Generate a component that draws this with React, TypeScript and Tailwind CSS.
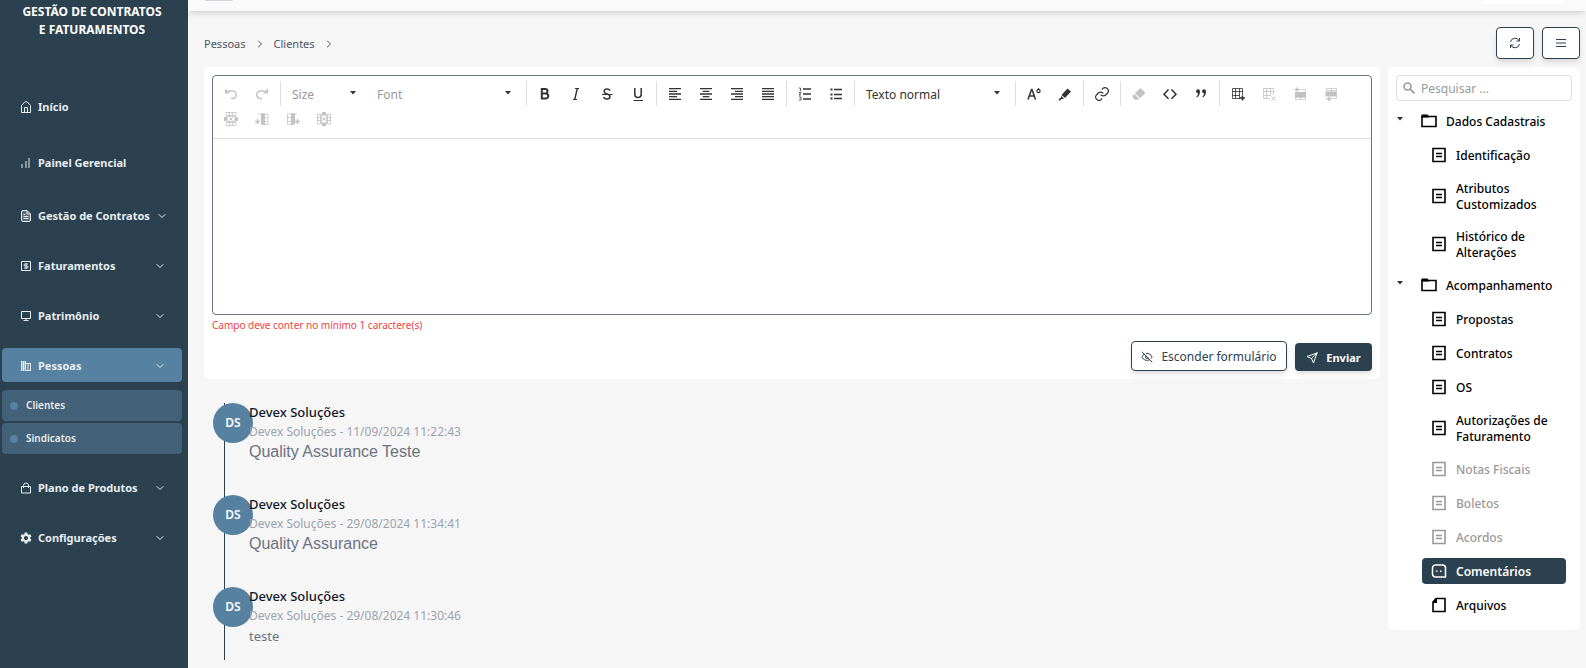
import type { ReactNode } from "react";
import { FiChevronDown, FiChevronRight, FiSend } from "react-icons/fi";
import { MdSettings, MdFormatAlignLeft, MdFormatAlignCenter, MdFormatAlignRight, MdFormatAlignJustify } from "react-icons/md";
import { LuEyeOff } from "react-icons/lu";

type IconProps = { children: ReactNode; size?: string; box?: number };

const Svg = ({ children, size = "size-4", box = 16 }: IconProps) => (
  <svg viewBox={`0 0 ${box} ${box}`} className={`${size} shrink-0`} fill="none" stroke="currentColor" strokeWidth="1" aria-hidden="true">
    {children}
  </svg>
);

const fill = { fill: "currentColor", stroke: "none" };

/* sidebar icons */
const HomeIcon = () => (
  <Svg size="size-3" box={12}>
    <path d="M1.500 4.500 4.500 1.200Q6 0 7.500 1.200L10.500 4.500V11.500h-9z" strokeLinejoin="round" />
    <path d="M4.500 11.500V6.500h3v5" />
  </Svg>
);
const ChartIcon = () => (
  <Svg size="size-3" box={12}>
    <g {...fill} opacity="0.5">
      <path d="M1 7h2v4H1zM5 4h2v7H5zM8 1h2v10H8z" />
    </g>
  </Svg>
);
const DocIcon = () => (
  <Svg size="size-3" box={12}>
    <path d="M1.500 2Q1.500.5 3 .5h4l3.500 3.500v6q0 1.500-1.500 1.500H3Q1.500 11.500 1.500 10z" fill="currentColor" fillOpacity="0.25" />
    <path d="M7 .5V4h3.500M3.500 6.500h5M3.500 8.500h5M3.500 4.500h2" />
  </Svg>
);
const MoneyIcon = () => (
  <Svg size="size-3" box={12}>
    <path d="M1.500 1.500h9v9h-9z" />
    <path d="M8 4H5Q4 4 4 5t1 1h2q1 0 1 1T7 8H4M6 3v6" />
  </Svg>
);
const MonitorIcon = () => (
  <Svg size="size-3" box={12}>
    <path d="M1.500 1.500h9v7h-9zM6 8.500v2M3.500 10.500h5" />
  </Svg>
);
const BuildingIcon = () => (
  <Svg size="size-3" box={12}>
    <path d="M1 1h5v10H1z" {...fill} opacity="0.5" />
    <path d="M1.500 1v10M3.500 1v10M5.500 1v10M6 3.500h5M6 10.500h5M8 3.500v7M10.500 3.500v7" />
  </Svg>
);
const LockIcon = () => (
  <Svg size="size-3" box={12}>
    <path d="M1.500 4.500h9v6.500h-9zM3.500 6V3.500Q3.500 1 6 1t2.500 2.500V6" />
  </Svg>
);

const menu = [
  { label: "Início", icon: <HomeIcon /> },
  { label: "Painel Gerencial", icon: <ChartIcon /> },
  { label: "Gestão de Contratos", icon: <DocIcon />, group: true },
  { label: "Faturamentos", icon: <MoneyIcon />, group: true },
  { label: "Patrimônio", icon: <MonitorIcon />, group: true },
  { label: "Pessoas", icon: <BuildingIcon />, group: true, children: ["Clientes", "Sindicatos"] },
  { label: "Plano de Produtos", icon: <LockIcon />, group: true },
  { label: "Configurações", icon: <MdSettings className="size-3 shrink-0 scale-115" />, group: true },
];

const Sidebar = () => (
  <aside className="w-[188px] shrink-0 bg-[#2c4150] text-[#e8edf0]">
    <h1 className="px-5 pt-[3px] pr-6 text-center text-[12px] leading-[18px] font-bold text-white">
      GESTÃO DE CONTRATOS E FATURAMENTOS
    </h1>
    <nav className="mt-[47px] flex flex-col gap-4 pr-[6px] pl-[2px]">
      {menu.map((item) => (
        <div key={item.label}>
          {item.group ? (
            <button
              type="button"
              className={`flex h-[34px] w-full items-center gap-[6px] rounded pt-[2px] pr-4 pl-[18px] text-[11px] font-bold ${
                item.children ? "bg-[#5681a0]" : ""
              }`}
            >
              {item.icon}
              <span className="flex-1 text-left whitespace-nowrap">{item.label}</span>
              <FiChevronDown className="size-3 shrink-0" />
            </button>
          ) : (
            <a href="#" className="flex h-10 items-center gap-[6px] pt-[2px] pl-[18px] text-[11px] font-bold">
              {item.icon}
              {item.label}
            </a>
          )}
          {item.children && (
            <ul className="mt-2 flex flex-col gap-[2px]">
              {item.children.map((child) => (
                <li key={child}>
                  <a href="#" className="flex h-[31px] items-center gap-2 rounded bg-[#436178] pl-2 text-[10px] font-semibold">
                    <span className="size-2 rounded-full bg-[#5681a0]" />
                    {child}
                  </a>
                </li>
              ))}
            </ul>
          )}
        </div>
      ))}
    </nav>
  </aside>
);

const Tool = ({ label, disabled, children }: { label: string; disabled?: boolean; children: ReactNode }) => (
  <button
    type="button"
    aria-label={label}
    disabled={disabled}
    className={`flex h-[25px] w-[31px] items-center justify-center ${disabled ? "text-[#c2c2c2]" : "text-[#333]"}`}
  >
    {children}
  </button>
);

const Separator = () => <span className="mr-[2px] ml-[3px] h-[25px] w-px bg-[#ddd]" />;

const Caret = () => (
  <svg viewBox="0 0 6 4" className="h-[4px] w-[6px]" aria-hidden="true">
    <path d="M0 0h6L3 3.500z" fill="#333" />
  </svg>
);

const ToolSelect = ({ label, width, muted }: { label: string; width: string; muted?: boolean }) => (
  <div className={`relative h-[25px] ${width}`}>
    <select
      aria-label={label}
      className={`h-full w-full appearance-none bg-transparent pl-[9px] text-[12px] outline-none ${muted ? "text-[#999]" : "text-[#333]"}`}
    >
      <option>{label}</option>
    </select>
    <span className="pointer-events-none absolute top-[10px] right-[12px]">
      <Caret />
    </span>
  </div>
);

const Toolbar = () => (
  <div className="flex flex-wrap border-b border-[#ddd] pt-[5px] pr-1 pb-[7px] pl-[2px]">
    <Tool label="Desfazer" disabled>
      <Svg><path d="M4.500 5h5a3.500 3.500 0 0 1 0 7.500H8" strokeWidth="1.500" /><path {...fill} d="M2 2.500v5h5z" /></Svg>
    </Tool>
    <Tool label="Refazer" disabled>
      <Svg><path d="M11.500 5h-5a3.500 3.500 0 0 0 0 7.500H8" strokeWidth="1.500" /><path {...fill} d="M14 2.500v5H9z" /></Svg>
    </Tool>
    <Separator />
    <ToolSelect label="Size" width="w-[85px]" muted />
    <ToolSelect label="Font" width="w-[155px]" muted />
    <Separator />
    <Tool label="Negrito">
      <Svg><path d="M4.800 3h3.400a2.200 2.200 0 0 1 0 4.600H4.800zM4.800 7.600h4a2.500 2.500 0 0 1 0 5H4.800z" strokeWidth="2" /></Svg>
    </Tool>
    <Tool label="Itálico">
      <Svg><path d="M7 2.500h4M5 13.500h4" /><path d="M9.300 2.500l-2.600 11" strokeWidth="1.400" /></Svg>
    </Tool>
    <Tool label="Tachado">
      <Svg><path d="M11 4.800Q10.500 3 8 3 5.200 3 5.200 5.200T8 8t3 2.600Q11 13 8 13t-3.200-2" strokeWidth="1.500" /><path d="M3 8.500h10.500" /></Svg>
    </Tool>
    <Tool label="Sublinhado">
      <Svg><path d="M4.800 2v6.500q0 3 3.200 3t3.200-3V2" strokeWidth="1.500" /><path d="M3.500 14.500h9.500" /></Svg>
    </Tool>
    <Separator />
    <Tool label="Alinhar à esquerda"><MdFormatAlignLeft className="size-4" /></Tool>
    <Tool label="Centralizar"><MdFormatAlignCenter className="size-4" /></Tool>
    <Tool label="Alinhar à direita"><MdFormatAlignRight className="size-4" /></Tool>
    <Tool label="Justificar"><MdFormatAlignJustify className="size-4" /></Tool>
    <Separator />
    <Tool label="Lista numerada">
      <Svg><path d="M6 3.500h8M6 8.500h8M6 13.500h8" strokeWidth="1.400" transform="translate(0 -.5)" /><path d="M2 2.500h1.500v3M2 7h2L2 9.500h2M2 11.500h2v3H2" strokeWidth=".8" transform="translate(0 -.5)" /></Svg>
    </Tool>
    <Tool label="Lista com marcadores">
      <Svg><path d="M6 3.500h8M6 8.500h8M6 12.500h8" strokeWidth="1.400" /><path {...fill} d="M2.500 2.500h2v2h-2zM2.500 7.500h2v2h-2zM2.500 11.500h2v2h-2z" /></Svg>
    </Tool>
    <Separator />
    <ToolSelect label="Texto normal" width="w-[155px]" />
    <Separator />
    <Tool label="Cor do texto">
      <Svg><path d="M2 13.500l3.500-10h.5l3.500 10M3.300 10h4.900" strokeWidth="1.500" /><circle cx="12.500" cy="5" r="1.600" strokeWidth="1.200" /><path d="M12.500 2v2" /></Svg>
    </Tool>
    <Tool label="Cor de fundo">
      <Svg><path {...fill} d="M10.500 2.500 14 5.500 8 12 4.500 9zM4 9.800 7 12.500l-2 .8-1-.8zM3 11.500 4.500 13 3 14.500H1.500z" /></Svg>
    </Tool>
    <Separator />
    <Tool label="Link">
      <Svg box={24}><path d="M10 13a5 5 0 0 0 7.500.5l3-3a5 5 0 0 0-7-7l-1.700 1.700M14 11a5 5 0 0 0-7.500-.5l-3 3a5 5 0 0 0 7 7l1.700-1.700" strokeWidth="1.800" /></Svg>
    </Tool>
    <Separator />
    <Tool label="Limpar formatação" disabled>
      <Svg><path {...fill} d="M9.500 2 14.500 7 9 12.200 4 7.200zM3.300 8 8 12.800l-1 1H4L1.500 11.300V10z" /></Svg>
    </Tool>
    <Tool label="Código">
      <Svg><path d="M6.500 3.500 2 8.200l4.500 4.600M9.500 3.500 14 8.200l-4.500 4.600" strokeWidth="1.500" /></Svg>
    </Tool>
    <Tool label="Citação">
      <Svg><path {...fill} d="M3 5.300a2 2 0 1 1 4 0Q7 9.500 4 11.500l-.7-.7Q5 9.300 5 7.300 3 7.300 3 5.300zM9 5.300a2 2 0 1 1 4 0q0 4.200-3 6.200l-.7-.7Q11 9.300 11 7.300 9 7.300 9 5.300z" /></Svg>
    </Tool>
    <Separator />
    <Tool label="Inserir tabela">
      <Svg><path d="M2.500 2.500h10v10h-10zM2.500 5.500h10M2.500 9.500h10M5.500 2.500v10M9.500 2.500v10" strokeWidth=".8" /><path d="M10 9h5v6h-5z" fill="#fff" stroke="none" /><path d="M12.500 9.500v5M10 12h5" strokeWidth="1.600" /></Svg>
    </Tool>
    <Tool label="Excluir tabela" disabled>
      <Svg><path d="M2.500 2.500h10v6M9 12.500H2.500v-10M2.500 5.500h10M2.500 9.500H10M5.500 2.500v10M9.500 2.500v7" strokeWidth=".8" /><path d="M10.500 10.500l4 4M14.500 10.500l-4 4" /></Svg>
    </Tool>
    <Tool label="Inserir linha acima" disabled>
      <Svg><path {...fill} d="M3 6h11v5H3z" /><path d="M8 3.500h5.500v10h-10V8M3.500 11.500h10M8.500 11v2.500" strokeWidth=".7" /><path d="M2.500 3.500h5M5 1.500v4" strokeWidth="1.500" /></Svg>
    </Tool>
    <Tool label="Inserir linha abaixo" disabled>
      <Svg><path {...fill} d="M2.500 5.500h11v5h-11z" /><path d="M9 12.500h4.500v-10h-10V9M3.500 4.500h10M8.500 2.500v3" strokeWidth=".7" /><path d="M3.500 13h5M6 11v4" strokeWidth="1.500" /></Svg>
    </Tool>
    <Tool label="Excluir linha" disabled>
      <Svg><path d="M3 1.500h10v3H3zM3 11.500h10v3H3zM6.500 1.500v3M9.500 1.500v3M6.500 11.500v3M9.500 11.500v3M3.500 5.500h9M3.500 10.500h9" strokeWidth=".8" /><path d="M6.500 6.500l3 3M9.500 6.500l-3 3" /><path {...fill} d="M1 6h3.500v4H1zM11.500 6H15v4h-3.500z" /></Svg>
    </Tool>
    <Tool label="Inserir coluna à esquerda" disabled>
      <Svg><path {...fill} d="M7 2.500h4v11H7z" /><path d="M4 3h10v10.500H8M10.500 6.500h3M10.500 10.500h3" strokeWidth=".8" /><path d="M1 10.500h5M3.500 8v5" strokeWidth="1.500" /></Svg>
    </Tool>
    <Tool label="Inserir coluna à direita" disabled>
      <Svg><path {...fill} d="M6 2.500h4v11H6z" /><path d="M12 3H2.500v10.500H8M2.500 6.500h4M2.500 10.500h4" strokeWidth=".8" /><path d="M10 10.500h5M12.500 8v5" strokeWidth="1.500" /></Svg>
    </Tool>
    <Tool label="Excluir coluna" disabled>
      <Svg><path d="M1.500 3h3v10h-3zM11.500 3h3v10h-3zM1.500 6.500h3M1.500 9.500h3M11.500 6.500h3M11.500 9.500h3M5.500 3.500v9M10.500 3.500v9" strokeWidth=".8" /><path d="M6.500 6.500l3 3M9.500 6.500l-3 3" /><path {...fill} d="M6 1h4v3.500H6zM6 11.500h4V15H6z" /></Svg>
    </Tool>
  </div>
);

const CommentForm = () => (
  <form onSubmit={(e) => e.preventDefault()} className="rounded-md bg-white p-2">
    <div className="rounded border border-[#6b7280]">
      <Toolbar />
      <textarea aria-label="Comentário" className="block h-[175px] w-full resize-none outline-none" />
    </div>
    <p className="mt-[2px] text-[10px] leading-4 text-[#ef4444]">Campo deve conter no mínimo 1 caractere(s)</p>
    <div className="mt-2 flex items-end justify-end gap-2">
      <button
        type="button"
        className="flex h-[30px] w-[156px] items-center justify-center gap-2 rounded border border-[#2c4150] bg-white pt-[2px] text-[12px] whitespace-nowrap text-[#2c4150] shadow-md"
      >
        <LuEyeOff className="size-3" />
        Esconder formulário
      </button>
      <button
        type="submit"
        className="flex h-7 w-[77px] items-center justify-center gap-2 rounded bg-[#2c4150] pt-[2px] text-[11px] font-bold text-white shadow-md"
      >
        <FiSend className="size-3" />
        Enviar
      </button>
    </div>
  </form>
);

const comments = [
  { date: "11/09/2024 11:22:43", text: "Quality Assurance Teste", rich: true },
  { date: "29/08/2024 11:34:41", text: "Quality Assurance", rich: true },
  { date: "29/08/2024 11:30:46", text: "teste", rich: false },
];

const Timeline = () => (
  <ol className="mt-6 ml-5 border-l border-[#2c4150]">
    {comments.map((comment) => (
      <li key={comment.date} className="relative h-[92px] pl-6 last:h-[73px]">
        <span className="absolute -left-3 flex size-10 items-center justify-center rounded-full bg-[#5681a0] text-[12px] font-semibold text-white">
          DS
        </span>
        <div className="relative">
          <h3 className="text-[13px] leading-[18px] font-medium text-[#111827]">Devex Soluções</h3>
          <p className="mt-px text-[12px] leading-5 text-[#9ca3af]">Devex Soluções - {comment.date}</p>
          <p className={`leading-5 text-[#6b7280] ${comment.rich ? "font-['Liberation_Sans',sans-serif] text-[16px]" : "text-[13px]"}`}>
            {comment.text}
          </p>
        </div>
      </li>
    ))}
  </ol>
);

const PageIcon = () => (
  <Svg>
    <path d="M2 2h12v13H2z" strokeWidth="1.600" transform="translate(0 -.5)" />
    <path d="M5 6.500h6M5 9.500h6" strokeWidth="1.400" />
  </Svg>
);
const FolderIcon = () => (
  <Svg>
    <path d="M1 3.500h14v10H1z" strokeWidth="1.600" />
    <path {...fill} d="M.5 1.500h6l1.500 2v1H.5z" />
  </Svg>
);
const CommentIcon = () => (
  <Svg>
    <path d="M4.500 2h7A3 3 0 0 1 14.500 5v9h-10A3 3 0 0 1 1.500 11V5a3 3 0 0 1 3-3z" strokeWidth="1.500" />
    <path {...fill} d="M5 7.500h1.500V9H5zM9 7.500h1.500V9H9z" />
  </Svg>
);
const FileIcon = () => (
  <Svg>
    <path d="M5 1.500h9v13H2V5z" strokeWidth="1.600" />
    <path {...fill} d="M6 1v5H1.500z" />
  </Svg>
);

type Leaf = { label: string; disabled?: boolean; active?: boolean; tall?: boolean; icon?: ReactNode };

const tree: { label: string; items: Leaf[] }[] = [
  {
    label: "Dados Cadastrais",
    items: [{ label: "Identificação" }, { label: "Atributos Customizados", tall: true }, { label: "Histórico de Alterações", tall: true }],
  },
  {
    label: "Acompanhamento",
    items: [
      { label: "Propostas" },
      { label: "Contratos" },
      { label: "OS" },
      { label: "Autorizações de Faturamento", tall: true },
      { label: "Notas Fiscais", disabled: true },
      { label: "Boletos", disabled: true },
      { label: "Acordos", disabled: true },
      { label: "Comentários", active: true, icon: <CommentIcon /> },
      { label: "Arquivos", icon: <FileIcon /> },
    ],
  },
];

const TreePanel = () => (
  <aside className="w-48 shrink-0 rounded-md bg-white px-2 pt-2 pb-3">
    <label className="flex h-[26px] items-center gap-[6px] rounded border border-[#ddd] px-[6px] text-[#999]">
      <Svg size="size-3" box={12}>
        <circle cx="4.500" cy="4.500" r="3.500" strokeWidth="1.600" />
        <path d="M7.200 7.200 11.300 11.300" strokeWidth="1.800" />
      </Svg>
      <input type="search" aria-label="Pesquisar" placeholder="Pesquisar ..." className="w-full pt-px text-[12px] outline-none placeholder:text-[#999]" />
    </label>
    <ul className="mt-[7px] flex flex-col gap-2 text-[12px] leading-4 font-medium text-black">
      {tree.map((group) => (
        <li key={group.label} className="flex flex-col gap-2">
          <button type="button" className="flex h-[26px] items-center text-left">
            <span className="mb-1 w-[25px] pl-px">
              <Caret />
            </span>
            <FolderIcon />
            <span className="ml-[9px] pt-[2px]">{group.label}</span>
          </button>
          <ul className="flex flex-col gap-2 pr-[6px] pl-[26px]">
            {group.items.map((item) => (
              <li key={item.label}>
                <a
                  href="#"
                  className={`flex items-center gap-[9px] rounded pr-4 pl-[9px] ${item.tall ? "h-10" : "h-[26px]"} ${
                    item.active ? "bg-[#2c4150] font-semibold text-white" : ""
                  } ${item.disabled ? "text-[#999]" : ""}`}
                >
                  {item.icon ?? <PageIcon />}
                  <span className="pt-[2px]">{item.label}</span>
                </a>
              </li>
            ))}
          </ul>
        </li>
      ))}
    </ul>
  </aside>
);

const Header = () => (
  <div className="flex items-start justify-between pt-4">
    <nav aria-label="Trilha" className="flex h-[34px] items-center gap-2 text-[11px] text-[#4b5563]">
      <a href="#">Pessoas</a>
      <FiChevronRight className="size-3" />
      <a href="#">Clientes</a>
      <FiChevronRight className="size-3" />
    </nav>
    <div className="flex gap-2">
      <button type="button" aria-label="Atualizar" className="flex h-8 w-[38px] items-center justify-center rounded border border-[#2c4150] bg-white text-[#2c4150] shadow-md">
        <Svg size="size-3" box={12}>
          <path d="M1.500 5A4.600 4.600 0 0 1 10 3.500M10.500 7A4.600 4.600 0 0 1 2 8.500M10.500 1v3h-3M1.500 11V8h3" />
        </Svg>
      </button>
      <button type="button" aria-label="Menu" className="flex h-8 w-[38px] items-center justify-center rounded border border-[#2c4150] bg-white text-[#2c4150] shadow-md">
        <Svg size="size-3" box={12}>
          <path d="M1 2.500h10M1 6h10M1 9.500h10" />
        </Svg>
      </button>
    </div>
  </div>
);

const App = () => {
  return (
    <div className="flex min-h-screen bg-[#f6f6f6] font-['Noto_Sans',sans-serif]">
      <Sidebar />
      <div className="flex min-w-0 flex-1 flex-col">
        <header className="flex h-[11px] items-start justify-between bg-[#fafafa] pr-6 pl-[17px] shadow-md">
          <span className="h-px w-7 rounded-b bg-gray-300" />
          <span className="h-1 w-20 rounded-b-full bg-white" />
        </header>
        <main className="pr-[6px] pl-4">
          <Header />
          <div className="mt-[6px] flex items-start gap-2">
            <section className="min-w-0 flex-1">
              <CommentForm />
              <Timeline />
            </section>
            <TreePanel />
          </div>
        </main>
      </div>
    </div>
  );
};

export default App;
